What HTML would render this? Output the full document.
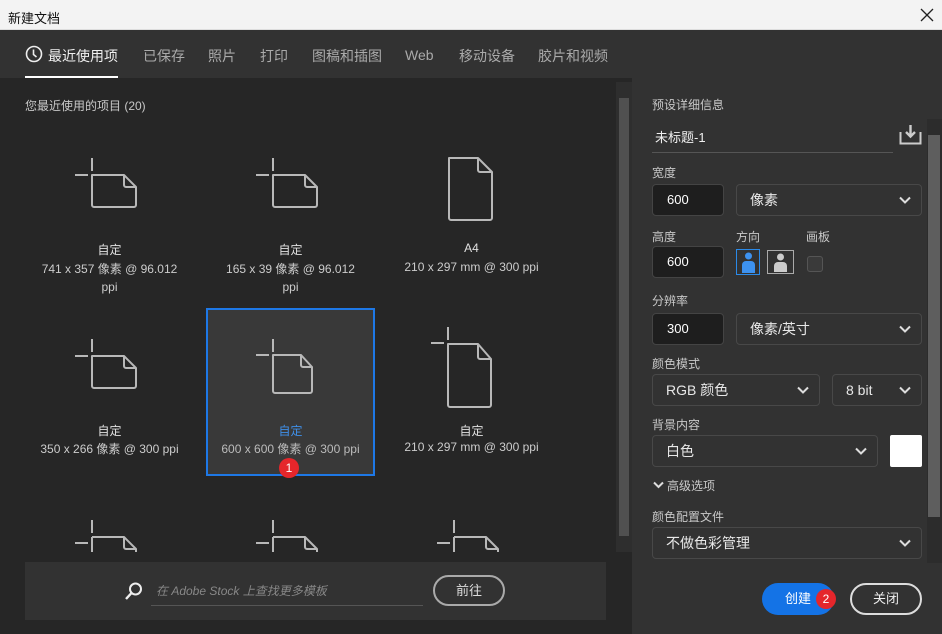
<!DOCTYPE html>
<html><head><meta charset="utf-8"><style>
*{margin:0;padding:0;box-sizing:border-box}
body{width:942px;height:634px;overflow:hidden;background:#262626;font-family:"Liberation Sans","Noto Sans CJK SC",sans-serif;position:relative;color:#ccc}
.abs{position:absolute}
.t{font-size:12px;color:#ccc;text-align:center;width:181px}
.lbl{font-size:12px;color:#c8c8c8}
.inp{position:absolute;background:#1e1e1e;border:1px solid #444;border-radius:4px;color:#fff;font-size:13px;padding-left:14px;line-height:30px;height:32px}
.sel{position:absolute;background:#323232;border:1px solid #484848;border-radius:4px;color:#e8e8e8;font-size:14px;padding-left:13px;line-height:30px;height:32px}
.chev{position:absolute;right:10px;top:11px}
</style></head><body>
<div class="abs" style="left:0;top:0;width:942px;height:30px;background:#f3f3f3;border-bottom:1px solid #ddd"></div>
<div class="abs" style="left:8px;top:8px;font-size:13px;color:#111">新建文档</div>
<svg class="abs" style="left:920px;top:8px" width="14" height="14"><path d="M1 1L13 13M13 1L1 13" stroke="#222" stroke-width="1.3"/></svg>
<div class="abs" style="left:0;top:30px;width:942px;height:48px;background:#323232"></div>
<svg class="abs" style="left:25px;top:45px" width="18" height="18"><circle cx="9" cy="9" r="7.5" fill="none" stroke="#eee" stroke-width="1.6"/><path d="M8.5 4.5V9.5L11.5 12" stroke="#eee" stroke-width="1.6" fill="none"/></svg>
<div class="abs" style="left:48px;top:46px;font-size:14px;color:#f0f0f0">最近使用项</div>
<div class="abs" style="left:25px;top:76px;width:93px;height:2px;background:#fff"></div>
<div class="abs" style="top:46px;font-size:14px;color:#aaa;left:143px">已保存</div>
<div class="abs" style="top:46px;font-size:14px;color:#aaa;left:208px">照片</div>
<div class="abs" style="top:46px;font-size:14px;color:#aaa;left:260px">打印</div>
<div class="abs" style="top:46px;font-size:14px;color:#aaa;left:312px">图稿和插图</div>
<div class="abs" style="top:47px;font-size:14px;color:#aaa;left:405px">Web</div>
<div class="abs" style="top:46px;font-size:14px;color:#aaa;left:459px">移动设备</div>
<div class="abs" style="top:46px;font-size:14px;color:#aaa;left:538px">胶片和视频</div>
<div class="abs lbl" style="left:25px;top:97px">您最近使用的项目 (20)</div>
<div class="abs" style="left:616px;top:82px;width:16px;height:470px;background:#2e2e2e"></div>
<div class="abs" style="left:619px;top:98px;width:10px;height:438px;background:#505050"></div>
<div class="abs" style="left:206px;top:308px;width:169px;height:168px;background:#393939;border:2px solid #1e78e6"></div>
<svg class="abs" style="left:0;top:78px" width="616" height="474" viewBox="0 78 616 474">
<g fill="none" stroke="#b8b8b8" stroke-width="2" stroke-linejoin="round">
<path d="M75 175H88M92 158V171"/><path d="M92 175V205a2 2 0 0 0 2 2H134a2 2 0 0 0 2-2V187L124 175Z"/><path d="M124 175V185a2 2 0 0 0 2 2H136"/>
<path d="M256 175H269M273 158V171"/><path d="M273 175V205a2 2 0 0 0 2 2H315a2 2 0 0 0 2-2V187L305 175Z"/><path d="M305 175V185a2 2 0 0 0 2 2H317"/>
<path d="M449 158V218a2 2 0 0 0 2 2H490a2 2 0 0 0 2-2V172L478 158Z"/><path d="M478 158V170a2 2 0 0 0 2 2H492"/>
<path d="M75 356H88M92 339V352"/><path d="M92 356V386a2 2 0 0 0 2 2H134a2 2 0 0 0 2-2V368L124 356Z"/><path d="M124 356V366a2 2 0 0 0 2 2H136"/>
<path d="M256 355H269M273 339V352"/><path d="M273 355V391a2 2 0 0 0 2 2H310a2 2 0 0 0 2-2V367L301 355Z"/><path d="M301 355V365a2 2 0 0 0 2 2H312"/>
<path d="M431 343H444M448 327V340"/><path d="M448 344V405a2 2 0 0 0 2 2H489a2 2 0 0 0 2-2V359L478 344Z"/><path d="M478 344V357a2 2 0 0 0 2 2H491"/>
<path d="M75 543H88M92 520V533"/><path d="M92 537V560M92 537H124L136 549V560"/><path d="M124 537V547a2 2 0 0 0 2 2H136"/>
<path d="M256 543H269M273 520V533"/><path d="M273 537V560M273 537H305L317 549V560"/><path d="M305 537V547a2 2 0 0 0 2 2H317"/>
<path d="M437 543H450M454 520V533"/><path d="M454 537V560M454 537H486L498 549V560"/><path d="M486 537V547a2 2 0 0 0 2 2H498"/>
</g></svg>
<div class="abs t" style="left:19px;top:241px;color:#e0e0e0">自定</div>
<div class="abs t" style="left:19px;top:260px;line-height:18px">741 x 357 像素 @ 96.012<br>ppi</div>
<div class="abs t" style="left:200px;top:241px;color:#e0e0e0">自定</div>
<div class="abs t" style="left:200px;top:260px;line-height:18px">165 x 39 像素 @ 96.012<br>ppi</div>
<div class="abs t" style="left:381px;top:241px;color:#e0e0e0">A4</div>
<div class="abs t" style="left:381px;top:260px">210 x 297 mm @ 300 ppi</div>
<div class="abs t" style="left:19px;top:422px;color:#e0e0e0">自定</div>
<div class="abs t" style="left:19px;top:440px">350 x 266 像素 @ 300 ppi</div>
<div class="abs t" style="left:200px;top:422px;color:#3f8fe8">自定</div>
<div class="abs t" style="left:200px;top:440px;color:#bbb">600 x 600 像素 @ 300 ppi</div>
<div class="abs t" style="left:381px;top:422px;color:#e0e0e0">自定</div>
<div class="abs t" style="left:381px;top:440px">210 x 297 mm @ 300 ppi</div>
<div class="abs" style="left:279px;top:458px;width:20px;height:20px;border-radius:50%;background:#e5262b;color:#fff;font-size:12px;text-align:center;line-height:20px">1</div>
<div class="abs" style="left:25px;top:562px;width:581px;height:58px;background:#323232"></div>
<svg class="abs" style="left:124px;top:581px" width="20" height="20"><circle cx="11.5" cy="8" r="5.5" fill="none" stroke="#eee" stroke-width="2"/><path d="M7.5 12L2 18" stroke="#eee" stroke-width="2.4"/></svg>
<div class="abs" style="left:156px;top:582px;font-size:12px;color:#888;font-style:italic">在 Adobe Stock 上查找更多模板</div>
<div class="abs" style="left:151px;top:605px;width:272px;height:1px;background:#555"></div>
<div class="abs" style="left:433px;top:575px;width:72px;height:31px;border:2px solid #aaa;border-radius:16px;color:#ddd;font-size:13px;text-align:center;line-height:27px">前往</div>
<div class="abs" style="left:632px;top:78px;width:310px;height:556px;background:#323232"></div>
<div class="abs" style="left:927px;top:119px;width:15px;height:444px;background:#2c2c2c"></div>
<div class="abs" style="left:928px;top:135px;width:12px;height:382px;background:#5e5e5e"></div>
<div class="abs lbl" style="left:652px;top:96px">预设详细信息</div>
<div class="abs" style="left:655px;top:127px;font-size:13px;color:#f0f0f0">未标题-1</div>
<div class="abs" style="left:652px;top:152px;width:241px;height:1px;background:#555"></div>
<svg class="abs" style="left:899px;top:124px" width="23" height="21"><path d="M1.5 8V19.5H21.5V8" fill="none" stroke="#ccc" stroke-width="2"/><path d="M11.5 1V12M7 8l4.5 4.5L16 8" fill="none" stroke="#ccc" stroke-width="2.4"/></svg>
<div class="abs lbl" style="left:652px;top:164px">宽度</div>
<div class="inp" style="left:652px;top:184px;width:72px">600</div>
<div class="sel" style="left:736px;top:184px;width:186px">像素<svg class="chev" width="12" height="8"><path d="M1 1.5L6 6.5L11 1.5" stroke="#ddd" stroke-width="2" fill="none"/></svg></div>
<div class="abs lbl" style="left:652px;top:228px">高度</div>
<div class="abs lbl" style="left:736px;top:228px">方向</div>
<div class="abs lbl" style="left:806px;top:228px">画板</div>
<div class="inp" style="left:652px;top:246px;width:72px">600</div>
<div class="abs" style="left:736px;top:249px;width:24px;height:26px;border:1.5px solid #2b8ae8"></div>
<svg class="abs" style="left:739px;top:251px" width="19" height="23"><circle cx="9.5" cy="5" r="3.5" fill="#3d92f0"/><path d="M3 22V14a4 4 0 0 1 4-4h5a4 4 0 0 1 4 4v8Z" fill="#3d92f0"/></svg>
<div class="abs" style="left:767px;top:250px;width:27px;height:24px;border:1.5px solid #aaa"></div>
<svg class="abs" style="left:769px;top:252px" width="23" height="20"><circle cx="11.5" cy="5" r="3.5" fill="#ccc"/><path d="M5 20V14a4 4 0 0 1 4-4h5a4 4 0 0 1 4 4v6Z" fill="#ccc"/></svg>
<div class="abs" style="left:807px;top:256px;width:16px;height:16px;border:1.5px solid #555;border-radius:3px;background:#3a3a3a"></div>
<div class="abs lbl" style="left:652px;top:292px">分辨率</div>
<div class="inp" style="left:652px;top:313px;width:72px">300</div>
<div class="sel" style="left:736px;top:313px;width:186px">像素/英寸<svg class="chev" width="12" height="8"><path d="M1 1.5L6 6.5L11 1.5" stroke="#ddd" stroke-width="2" fill="none"/></svg></div>
<div class="abs lbl" style="left:652px;top:355px">颜色模式</div>
<div class="sel" style="left:652px;top:374px;width:168px">RGB 颜色<svg class="chev" width="12" height="8"><path d="M1 1.5L6 6.5L11 1.5" stroke="#ddd" stroke-width="2" fill="none"/></svg></div>
<div class="sel" style="left:832px;top:374px;width:90px">8 bit<svg class="chev" width="12" height="8"><path d="M1 1.5L6 6.5L11 1.5" stroke="#ddd" stroke-width="2" fill="none"/></svg></div>
<div class="abs lbl" style="left:652px;top:416px">背景内容</div>
<div class="sel" style="left:652px;top:435px;width:226px">白色<svg class="chev" width="12" height="8"><path d="M1 1.5L6 6.5L11 1.5" stroke="#ddd" stroke-width="2" fill="none"/></svg></div>
<div class="abs" style="left:890px;top:435px;width:32px;height:32px;background:#fff;border-radius:2px"></div>
<svg class="abs" style="left:653px;top:481px" width="11" height="8"><path d="M1 1.5L5.5 6L10 1.5" stroke="#ddd" stroke-width="2" fill="none"/></svg>
<div class="abs lbl" style="left:667px;top:477px">高级选项</div>
<div class="abs lbl" style="left:652px;top:508px">颜色配置文件</div>
<div class="sel" style="left:652px;top:527px;width:270px">不做色彩管理<svg class="chev" width="12" height="8"><path d="M1 1.5L6 6.5L11 1.5" stroke="#ddd" stroke-width="2" fill="none"/></svg></div>
<div class="abs" style="left:762px;top:583px;width:72px;height:32px;border-radius:16px;background:#1473e6;color:#fff;font-size:13px;line-height:32px;padding-left:23px">创建</div>
<div class="abs" style="left:816px;top:589px;width:20px;height:20px;border-radius:50%;background:#e5262b;color:#fff;font-size:12px;text-align:center;line-height:20px">2</div>
<div class="abs" style="left:850px;top:583px;width:72px;height:32px;border:2px solid #ddd;border-radius:16px;color:#eee;font-size:13px;text-align:center;line-height:28px">关闭</div>
</body></html>
